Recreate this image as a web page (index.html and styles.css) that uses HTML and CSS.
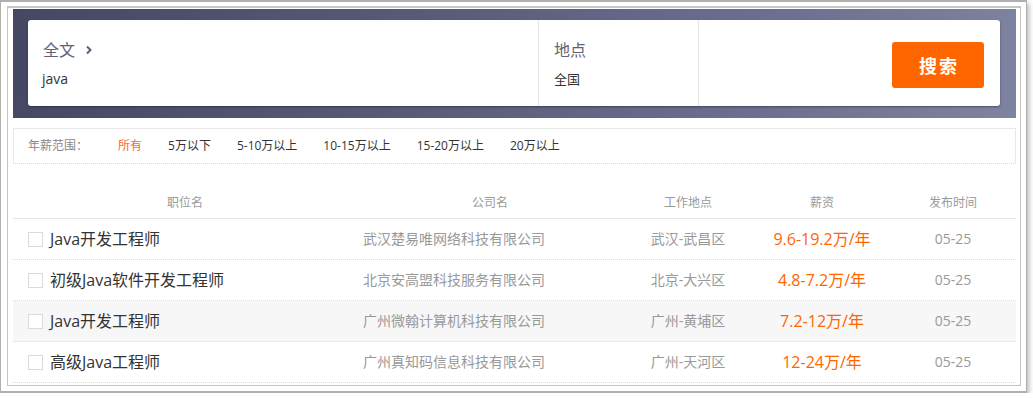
FILE: index.html
```html
<!DOCTYPE html>
<html lang="zh-CN">
<head>
<meta charset="utf-8">
<title>职位搜索</title>
<link rel="stylesheet" href="styles.css">
</head>
<body>
<div class="frame">
  <div class="inner">
    <div class="hero">
      <div class="search">
        <div class="field field-main">
          <div class="field-label">全文 <svg class="chev" width="8" height="10" viewBox="0 0 8 10"><path d="M2 1.5 L5.5 5 L2 8.5" fill="none" stroke="#5f6078" stroke-width="2"/></svg></div>
          <div class="field-value">java</div>
        </div>
        <div class="field field-city">
          <div class="field-label">地点</div>
          <div class="field-value small">全国</div>
        </div>
        <div class="field field-action">
          <button class="btn">搜索</button>
        </div>
      </div>
    </div>

    <div class="filter">
      <span class="filter-label">年薪范围：</span>
      <span class="filter-item active">所有</span>
      <span class="filter-item">5万以下</span>
      <span class="filter-item">5-10万以上</span>
      <span class="filter-item">10-15万以上</span>
      <span class="filter-item">15-20万以上</span>
      <span class="filter-item">20万以上</span>
    </div>

    <div class="list">
      <div class="row head">
        <div class="c-job">职位名</div>
        <div class="c-co">公司名</div>
        <div class="c-loc">工作地点</div>
        <div class="c-sal">薪资</div>
        <div class="c-date">发布时间</div>
      </div>
      <div class="row">
        <div class="c-job"><span class="cb"></span>Java开发工程师</div>
        <div class="c-co">武汉楚易唯网络科技有限公司</div>
        <div class="c-loc">武汉-武昌区</div>
        <div class="c-sal">9.6-19.2万/年</div>
        <div class="c-date">05-25</div>
      </div>
      <div class="row">
        <div class="c-job"><span class="cb"></span>初级Java软件开发工程师</div>
        <div class="c-co">北京安高盟科技服务有限公司</div>
        <div class="c-loc">北京-大兴区</div>
        <div class="c-sal">4.8-7.2万/年</div>
        <div class="c-date">05-25</div>
      </div>
      <div class="row hover">
        <div class="c-job"><span class="cb"></span>Java开发工程师</div>
        <div class="c-co">广州微翰计算机科技有限公司</div>
        <div class="c-loc">广州-黄埔区</div>
        <div class="c-sal">7.2-12万/年</div>
        <div class="c-date">05-25</div>
      </div>
      <div class="row">
        <div class="c-job"><span class="cb"></span>高级Java工程师</div>
        <div class="c-co">广州真知码信息科技有限公司</div>
        <div class="c-loc">广州-天河区</div>
        <div class="c-sal">12-24万/年</div>
        <div class="c-date">05-25</div>
      </div>
    </div>
  </div>
</div>
</body>
</html>
```

FILE: styles.css
```css
* { box-sizing: border-box; }
html, body { margin: 0; padding: 0; background: #fff; }
body {
  font-family: "Open Sans", "Noto Sans CJK SC", sans-serif;
  color: #333;
}
.frame {
  width: 1027px;
  height: 393px;
  border: 1px solid #b0b0b0;
  border-top-width: 2px;
  border-bottom-width: 2px;
  padding: 4px 5px 5px 6px;
  box-shadow: 2px 3px 5px rgba(0, 0, 0, 0.28);
  background: #fff;
}
.inner {
  height: 380px;
  border: 1px solid #c6c6c6;
  border-top-width: 2px;
  padding: 1px 4px 2px 5px;
}
.hero {
  height: 109px;
  padding: 11px 16px 12px 15px;
  background: linear-gradient(100deg, #464763 0%, #585a79 40%, #6c7090 75%, #7e83a0 100%);
}
.search {
  display: flex;
  height: 86px;
  background: #fff;
  border-radius: 3px;
  box-shadow: 0 1px 2px rgba(20, 20, 40, 0.45);
}
.field { padding: 19px 0 0 15px; }
.field-main { width: 510px; }
.field-city { width: 160px; border-left: 1px solid #e6e6e6; }
.field-action {
  flex: 1;
  border-left: 1px solid #e6e6e6;
  display: flex;
  align-items: center;
  justify-content: flex-end;
  padding: 4px 16px 0 0;
}
.field-label {
  display: flex;
  align-items: center;
  height: 20px;
  font-family: "Noto Sans CJK SC", sans-serif;
  font-size: 16px;
  line-height: 20px;
  color: #606174;
}
.chev { margin-left: 10px; margin-top: 1px; }
.field-value {
  margin-top: 10px;
  font-size: 14px;
  line-height: 20px;
  color: #333;
  margin-left: -1px;
}
.field-value.small { font-size: 13px; margin-left: 0; }
.btn {
  width: 92px;
  height: 46px;
  border: none;
  border-radius: 3px;
  background: #ff6600;
  color: #fff;
  font-family: "Noto Sans CJK SC", sans-serif;
  font-size: 18px;
  font-weight: bold;
  letter-spacing: 2px;
  padding: 0 0 0 2px;
  line-height: 46px;
}
.filter {
  margin-top: 10px;
  height: 36px;
  border: 1px solid #e8e8e8;
  border-bottom: 1px dotted #d8d8d8;
  display: flex;
  align-items: center;
  padding-left: 14px;
  font-size: 12px;
  line-height: 16px;
}
.filter-label { color: #888; margin-right: 30px; }
.filter-item { color: #333; margin-right: 26px; }
.filter-item.active { color: #ff6633; }
.list { margin-top: 24px; }
.row {
  display: grid;
  grid-template-columns: 344px 266px 130px 138px 124px;
  height: 41px;
  align-items: center;
  border-bottom: 1px dotted #dcdcdc;
  font-size: 14px;
  line-height: 20px;
  color: #999;
}
.row.head {
  height: 31px;
  border-bottom: 1px solid #e6e6e6;
  font-size: 12px;
  color: #999;
  text-align: center;
}
.row.hover { background: #f7f7f7; }
.c-job {
  display: flex;
  align-items: center;
  padding-left: 15px;
  font-size: 16px;
  color: #333;
}
.head .c-job { display: block; padding-left: 0; font-size: 12px; color: #999; }
.cb {
  width: 15px;
  height: 15px;
  border: 1px solid #dadada;
  background: #fff;
  margin-right: 7px;
  flex: none;
}
.c-co { padding-left: 6px; }
.head .c-co { padding-left: 0; }
.c-loc, .c-sal, .c-date { text-align: center; }
.c-sal { font-size: 16px; color: #ff6600; }
.head .c-sal { font-size: 12px; color: #999; }
```
